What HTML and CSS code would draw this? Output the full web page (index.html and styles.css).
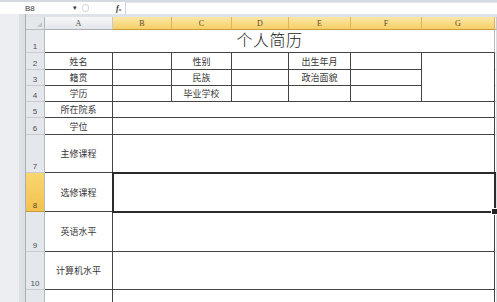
FILE: index.html
```html
<!DOCTYPE html>
<html lang="zh-CN">
<head>
<meta charset="utf-8">
<title>个人简历</title>
<link rel="stylesheet" href="styles.css">
</head>
<body>
<div class="formula-bar">
  <div class="name-box"><span class="name">B8</span><span class="arrow">▾</span></div>
  <div class="fb-tools"><span class="circle"></span><span class="fx">f<small>x</small></span></div>
  <div class="formula-input"></div>
</div>
<div class="sheet">
  <div class="strip"></div>
  <div class="grid">
    <div class="corner"></div>
    <div class="ch">A</div>
    <div class="ch sel">B</div>
    <div class="ch sel">C</div>
    <div class="ch sel">D</div>
    <div class="ch sel">E</div>
    <div class="ch sel">F</div>
    <div class="ch sel">G</div>
    <div class="ch"></div>

    <div class="rh">1</div>
    <div class="c title span7">个人简历</div>
    <div class="c"></div>

    <div class="rh">2</div>
    <div class="c b">姓名</div>
    <div class="c b"></div>
    <div class="c b">性别</div>
    <div class="c b"></div>
    <div class="c b">出生年月</div>
    <div class="c b"></div>
    <div class="c b photo"></div>
    <div class="c"></div>

    <div class="rh">3</div>
    <div class="c b">籍贯</div>
    <div class="c b"></div>
    <div class="c b">民族</div>
    <div class="c b"></div>
    <div class="c b">政治面貌</div>
    <div class="c b"></div>
    <div class="c"></div>

    <div class="rh">4</div>
    <div class="c b">学历</div>
    <div class="c b"></div>
    <div class="c b">毕业学校</div>
    <div class="c b"></div>
    <div class="c b"></div>
    <div class="c b"></div>
    <div class="c"></div>

    <div class="rh">5</div>
    <div class="c b">所在院系</div>
    <div class="c b span6"></div>
    <div class="c"></div>

    <div class="rh">6</div>
    <div class="c b">学位</div>
    <div class="c b span6"></div>
    <div class="c"></div>

    <div class="rh">7</div>
    <div class="c b">主修课程</div>
    <div class="c b span6"></div>
    <div class="c"></div>

    <div class="rh sel">8</div>
    <div class="c b">选修课程</div>
    <div class="c b span6 active"></div>
    <div class="c"></div>

    <div class="rh">9</div>
    <div class="c b">英语水平</div>
    <div class="c b span6"></div>
    <div class="c"></div>

    <div class="rh">10</div>
    <div class="c b">计算机水平</div>
    <div class="c b span6"></div>
    <div class="c"></div>

    <div class="rh"></div>
    <div class="c b"></div>
    <div class="c b span6"></div>
    <div class="c"></div>
  </div>
</div>
</body>
</html>
```
FILE: styles.css
```css
html, body {
  margin: 0;
  padding: 0;
}
body {
  width: 497px;
  height: 302px;
  overflow: hidden;
  background: #ffffff;
  font-family: "Liberation Sans", "Noto Sans CJK SC", sans-serif;
  color: #222;
}

/* formula bar */
.formula-bar {
  display: flex;
  height: 14px;
  box-sizing: border-box;
  border-top: 2px solid #d5dae0;
  background: #fff;
}
.name-box {
  width: 80px;
  box-sizing: border-box;
  display: flex;
  align-items: center;
  padding-left: 25px;
  font-size: 8px;
  color: #333;
}
.name { flex: 1; }
.arrow {
  font-size: 7px;
  margin-right: 3px;
  color: #333;
}
.fb-tools {
  width: 45px;
  display: flex;
  align-items: center;
}
.circle {
  width: 5px;
  height: 6px;
  border: 1px solid #d4d7db;
  border-radius: 50%;
  margin-left: 2px;
}
.fx {
  margin-left: 27px;
  font-family: "Liberation Serif", serif;
  font-style: italic;
  font-weight: bold;
  font-size: 8px;
  color: #333;
}
.fx small { font-size: 5px; }
.formula-input {
  flex: 1;
  border-left: 1px solid #d0d4d9;
  border-top: 1px solid #e3e6ea;
}

/* sheet */
.sheet {
  display: flex;
  height: 288px;
  background: #dfe3e8;
}
.strip {
  width: 25px;
  border-right: 1px solid #a9aeb5;
  background: linear-gradient(to right, #eceef1 0, #eceef1 19px, #dde0e4 19px);
}
.grid {
  flex: 1;
  margin-top: 3px;
  display: grid;
  grid-template-columns: 19px 68px 59px 60px 57px 62px 71px 73px 1fr;
  grid-template-rows: 13px 23px 17px 16px 16px 16px 17px 38px 39px 40px 38px 17px;
  align-content: start;
  background: #fff;
}
.grid > div {
  box-sizing: border-box;
  min-width: 0;
}

.corner {
  position: relative;
  background: #e4e7eb;
  border-right: 1px solid #b5bac1;
  border-bottom: 1px solid #b5bac1;
}
.corner::after {
  content: "";
  position: absolute;
  right: 2px;
  bottom: 2px;
  border-left: 5px solid transparent;
  border-bottom: 5px solid #c3c7cc;
}

.ch {
  display: flex;
  align-items: center;
  justify-content: center;
  font-family: "Liberation Serif", serif;
  font-size: 8px;
  color: #4a4f57;
  background: linear-gradient(#f6f7f8, #e3e6ea);
  border-right: 1px solid #c6cad0;
  border-bottom: 1px solid #a9aeb5;
}
.ch.sel {
  background: linear-gradient(#fde8a8, #f6cf66);
  border-right: 1px solid #e2b552;
  border-bottom: 1px solid #c89a3a;
  color: #5a4a2a;
}

.rh {
  display: flex;
  align-items: flex-end;
  justify-content: center;
  padding-bottom: 1px;
  font-size: 8px;
  color: #4a4f57;
  background: #e4e7eb;
  border-right: 1px solid #b5bac1;
  border-bottom: 1px solid #c8ccd2;
}
.rh.sel {
  background: linear-gradient(#f8d670, #f3c24e);
  border-bottom: 1px solid #c89a3a;
  color: #5a4a2a;
}

.c {
  display: flex;
  align-items: center;
  justify-content: center;
  font-family: "Noto Sans CJK SC", sans-serif;
  font-size: 9px;
  color: #383838;
  border-right: 1px solid #dadcdf;
  border-bottom: 1px solid #dadcdf;
}
.c.b {
  border-right-color: #444;
  border-bottom-color: #444;
}
.span7 { grid-column: span 7; }
.span6 { grid-column: span 6; }
.photo { grid-row: span 3; }

.title {
  align-items: flex-end;
  padding-bottom: 1px;
  font-size: 16px;
  font-weight: 300;
  color: #1a1a1a;
  border-bottom-color: #444;
  border-right-color: #b8bbbf;
  letter-spacing: 0.5px;
}

.active {
  position: relative;
  z-index: 1;
  outline: 2px solid #2a2a2a;
  outline-offset: -1px;
}
.active::after {
  content: "";
  position: absolute;
  right: -4px;
  bottom: -4px;
  width: 5px;
  height: 5px;
  background: #222;
  border: 1px solid #fff;
}
```
